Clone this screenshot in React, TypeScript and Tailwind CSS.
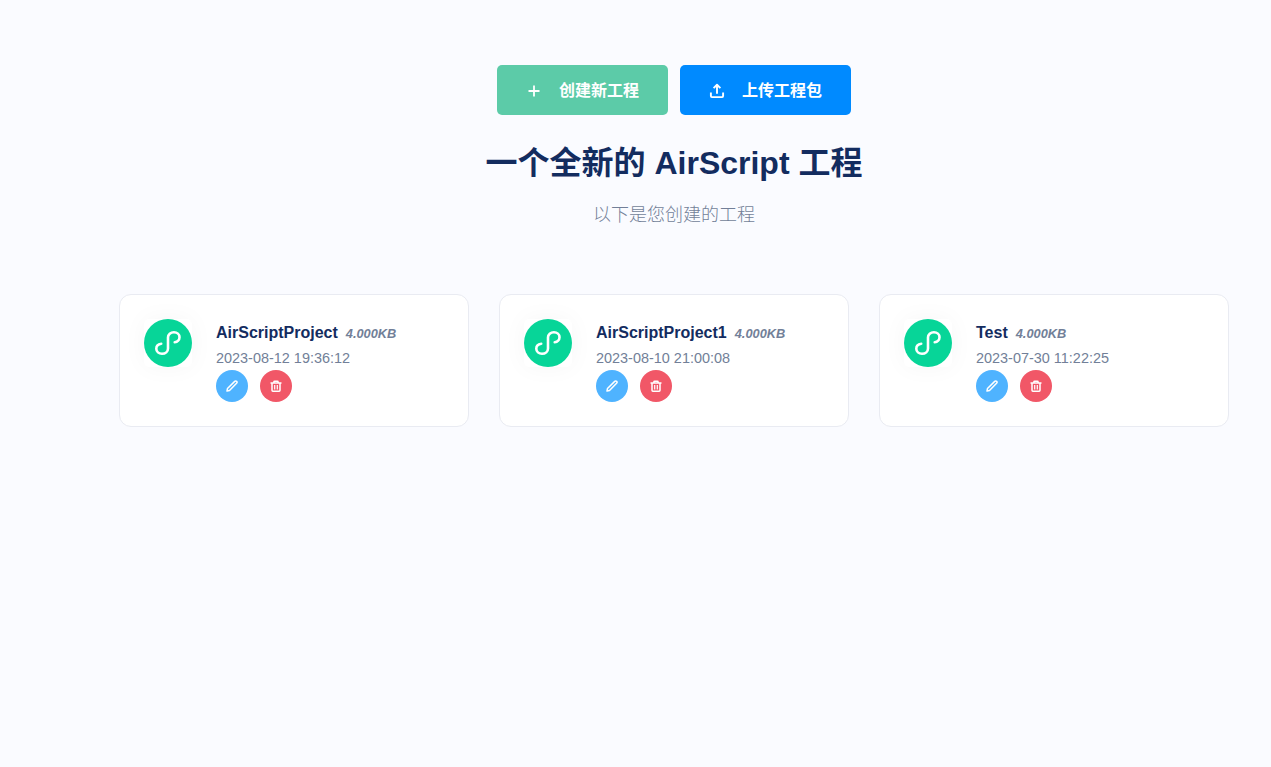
const projects = [
  { name: 'AirScriptProject', size: '4.000KB', date: '2023-08-12 19:36:12' },
  { name: 'AirScriptProject1', size: '4.000KB', date: '2023-08-10 21:00:08' },
  { name: 'Test', size: '4.000KB', date: '2023-07-30 11:22:25' },
];

function PlusIcon() {
  return (
    <svg className="h-4 w-4" viewBox="0 0 16 16" fill="none" stroke="currentColor" strokeWidth="1.8">
      <path d="M8 2.5v11M2.5 8h11" />
    </svg>
  );
}

function UploadIcon() {
  return (
    <svg className="h-4 w-4" viewBox="0 0 16 16" fill="none" stroke="currentColor" strokeWidth="1.9" strokeLinecap="butt" strokeLinejoin="round">
      <path d="M8 10.8V2.2M4.6 5.1L8 1.8L11.4 5.1" />
      <path d="M1.9 9.6v3.5q0 1 1 1h10.2q1 0 1-1V9.6" />
    </svg>
  );
}

function PencilIcon() {
  return (
    <svg className="h-3 w-3" viewBox="0 0 12 12" fill="none" stroke="currentColor" strokeWidth="1.5" strokeLinecap="round" strokeLinejoin="round">
      <path d="M1 11l.5-2.5L8.7 1.4a1.3 1.3 0 0 1 1.9 1.9L3.5 10.5z" />
    </svg>
  );
}

function TrashIcon() {
  return (
    <svg className="h-3 w-3" viewBox="0 0 12 12" fill="none" stroke="currentColor" strokeWidth="1.5" strokeLinejoin="round">
      <path d="M.5 3h11M3.9 2.8V1.9q0-.7.7-.7h2.8q.7 0 .7.7v.9" />
      <path d="M2 3v7.3q0 .9.9.9h6.2q.9 0 .9-.9V3" />
      <path d="M4.7 5v4.4M7.3 5v4.4" strokeWidth="1.2" />
    </svg>
  );
}

function ProjectLogo() {
  return (
    <div className="h-12 w-12 shrink-0 rounded-[5px] bg-white shadow-[0_0_25px_rgba(0,0,0,0.04)]">
      <svg className="h-12 w-12" viewBox="0 0 48 48" fill="none">
        <circle cx="24" cy="24" r="24" fill="#07d598" />
        <path
          d="M17.2 24.8C14.4 25.2 12.3 27.2 12.3 29.8C12.3 32.6 14.8 34.8 18 34.8C21.4 34.8 24 32.5 24 29.5V18.5C24 15.4 26.6 13.2 29.9 13.2C33.1 13.2 35.5 15.4 35.5 18.2C35.5 20.8 33.5 22.9 30.7 23.2"
          stroke="white"
          strokeWidth="2.6"
          strokeLinecap="round"
        />
      </svg>
    </div>
  );
}

export default function App() {
  return (
    <main className="min-h-screen overflow-hidden bg-[#fafbff] pl-[119px] pt-[65px] font-['Liberation_Sans','Noto_Sans_CJK_SC',sans-serif]">
      <div className="w-[1110px]">
        <header className="flex flex-col items-center">
          <div className="flex gap-3">
            <button className="flex h-[50px] w-[171px] items-center rounded-[5px] bg-[#5ccba8] pl-[29px] pt-0.5 text-base font-bold text-white">
              <PlusIcon />
              <span className="ml-[17px]">创建新工程</span>
            </button>
            <button className="flex h-[50px] w-[171px] items-center rounded-[5px] bg-[#008aff] pl-[29px] pt-0.5 text-base font-bold text-white">
              <UploadIcon />
              <span className="ml-[17px]">上传工程包</span>
            </button>
          </div>
          <h1 className="mt-6 text-[32px] font-bold leading-[48px] text-[#132c5f]">一个全新的 AirScript 工程</h1>
          <p className="mt-[13px] text-lg font-light leading-[30px] text-[#727f98]">以下是您创建的工程</p>
        </header>
        <section className="mt-16 grid grid-cols-3 gap-[30px]">
          {projects.map((project) => (
            <article key={project.name} className="flex h-[133px] gap-6 rounded-[12px] border border-[#e9ebf2] bg-white p-6">
              <ProjectLogo />
              <div>
                <h2 className="flex h-[27px] items-center pt-px text-base font-bold text-[#132c5f]">
                  {project.name}
                  <em className="ml-2 pt-px text-[12.8px] text-[#727f98]">{project.size}</em>
                </h2>
                <p className="h-6 text-[14.45px] leading-[25px] text-[#727f98]">{project.date}</p>
                <div className="flex gap-3">
                  <button aria-label="编辑" className="flex h-8 w-8 items-center justify-center rounded-full bg-[#4fb3ff] text-white">
                    <PencilIcon />
                  </button>
                  <button aria-label="删除" className="flex h-8 w-8 items-center justify-center rounded-full bg-[#f15767] text-white">
                    <TrashIcon />
                  </button>
                </div>
              </div>
            </article>
          ))}
        </section>
      </div>
    </main>
  );
}
